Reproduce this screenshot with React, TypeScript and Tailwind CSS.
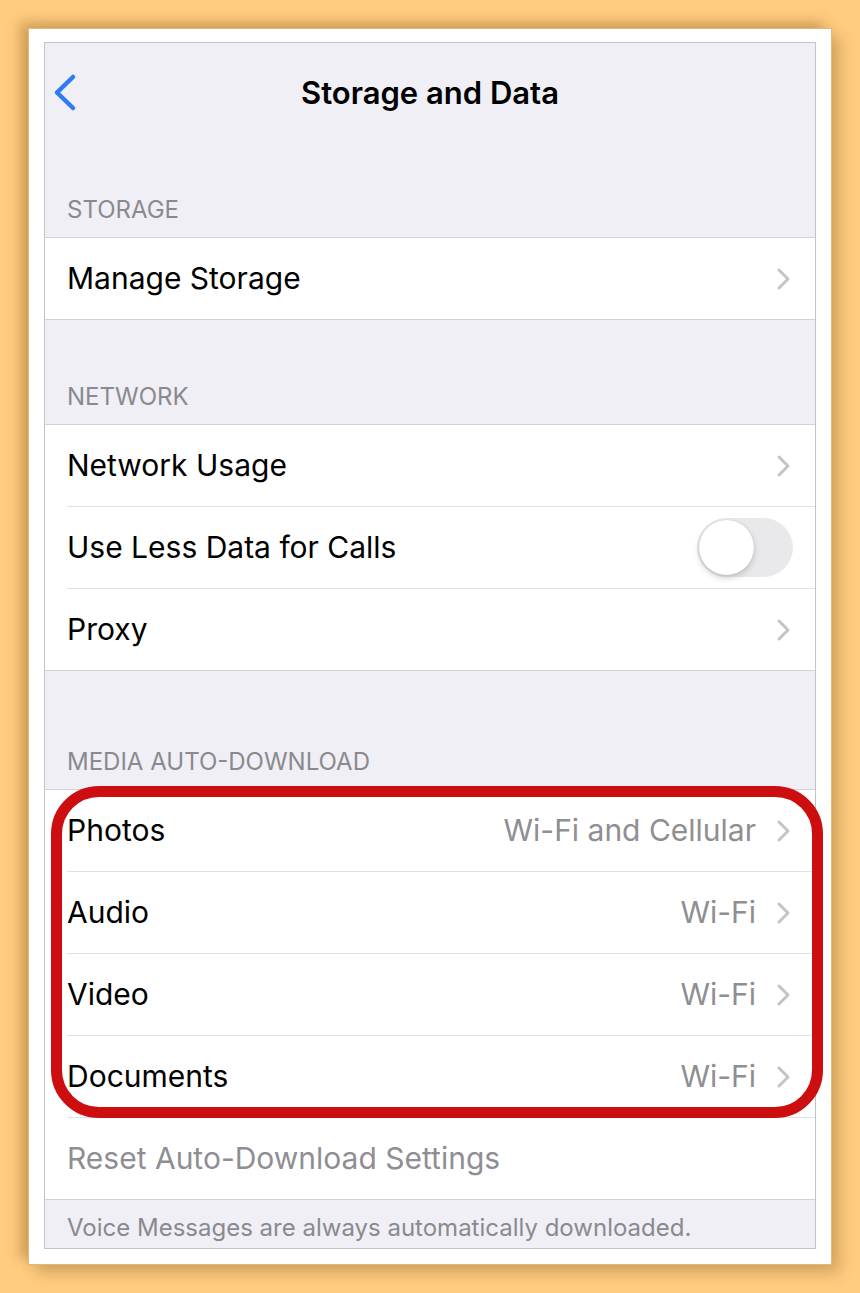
const font = { fontFamily: "Inter, 'Noto Sans', sans-serif" };

function Chevron() {
  return (
    <svg width="16" height="24" viewBox="0 0 16 24" className="shrink-0">
      <path d="M3 3l9 9-9 9" fill="none" stroke="#c4c4c7" strokeWidth="3" strokeLinecap="round" strokeLinejoin="round" />
    </svg>
  );
}

function Header({ h, children }: { h: number; children: React.ReactNode }) {
  return (
    <div className="flex items-end pl-[22px] pb-[13px]" style={{ height: h }}>
      <span className="text-[24px] leading-[28px] text-[#8a8a8e] uppercase">{children}</span>
    </div>
  );
}

function Row({
  label,
  value,
  first,
  toggle,
  muted,
  noChevron,
}: {
  label: string;
  value?: string;
  first?: boolean;
  toggle?: boolean;
  muted?: boolean;
  noChevron?: boolean;
}) {
  return (
    <div className="pl-[22px] bg-white">
      <div
        className={`flex items-center pr-[23px] ${first ? "h-[81px]" : "h-[82px] border-t border-[#e1e1e4]"}`}
      >
        <span className={`flex-1 text-[30px] ${muted ? "text-[#8e8e93]" : "text-black"}`}>{label}</span>
        {value && <span className="text-[30px] text-[#8e8e93] mr-[20px]">{value}</span>}
        {toggle ? (
          <div className="w-[96px] h-[59px] rounded-full bg-[#e9e9eb] p-[2px] mr-[-1px]">
            <div className="w-[55px] h-[55px] rounded-full bg-white shadow-[0_3px_6px_rgba(0,0,0,0.18),0_0_1px_rgba(0,0,0,0.2)]" />
          </div>
        ) : (
          !noChevron && <Chevron />
        )}
      </div>
    </div>
  );
}

export default function App() {
  return (
    <div className="relative w-[860px] h-[1293px] bg-[#ffcc80] pt-[28px] pl-[28px]" style={font}>
      <div className="w-[804px] h-[1237px] bg-white pt-[13px] px-[15px] pb-[15px] shadow-[-8px_-6px_12px_rgba(120,80,20,0.35),8px_8px_14px_rgba(120,80,20,0.3)] border border-[#e0b87a]">
        <div className="h-full bg-[#f0eff5] border border-[#c4c4c8] overflow-hidden">
          {/* Nav */}
          <div className="relative h-[100px] flex items-center justify-center">
            <svg width="26" height="40" viewBox="0 0 26 40" className="absolute left-[8px] top-[30px]">
              <path d="M20 4L4 19.5 20 35" fill="none" stroke="#2f7bf5" strokeWidth="4.5" strokeLinecap="round" strokeLinejoin="round" />
            </svg>
            <span className="text-[31px] font-semibold text-black">Storage and Data</span>
          </div>

          <Header h={94}>Storage</Header>
          <div className="border-y border-[#d1d1d6]">
            <Row label="Manage Storage" first />
          </div>

          <Header h={104}>Network</Header>
          <div className="border-y border-[#d1d1d6]">
            <Row label="Network Usage" first />
            <Row label="Use Less Data for Calls" toggle />
            <Row label="Proxy" />
          </div>

          <Header h={118}>Media Auto-Download</Header>
          <div className="border-y border-[#d1d1d6]">
            <Row label="Photos" value="Wi-Fi and Cellular" first />
            <Row label="Audio" value="Wi-Fi" />
            <Row label="Video" value="Wi-Fi" />
            <Row label="Documents" value="Wi-Fi" />
            <Row label="Reset Auto-Download Settings" muted noChevron />
          </div>
          <div className="pl-[22px] pt-[14px] text-[24px] leading-[28px] text-[#8a8a8e]">
            Voice Messages are always automatically downloaded.
          </div>
        </div>
      </div>

      {/* red highlight annotation */}
      <div className="absolute left-[51px] top-[786px] w-[772px] h-[332px] rounded-[48px] border-[11px] border-[#cc0e10] pointer-events-none" />
    </div>
  );
}
